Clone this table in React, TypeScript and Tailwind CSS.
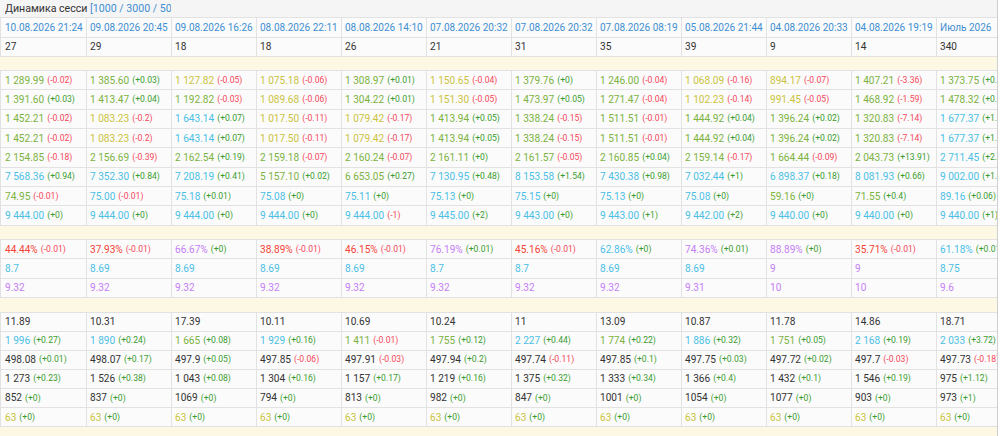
import React from "react"

type Cell = [string, string, string?]

const valueColor: Record<string, string> = {
  g: "text-[#7cb342]",
  y: "text-[#cbc340]",
  b: "text-[#4bbfe5]",
  p: "text-[#c57ef5]",
  r: "text-[#f44336]",
  d: "text-[#333333]",
}

const dates = [
  "10.08.2026 21:24",
  "09.08.2026 20:45",
  "09.08.2026 16:26",
  "08.08.2026 22:11",
  "08.08.2026 14:10",
  "07.08.2026 20:32",
  "07.08.2026 20:32",
  "07.08.2026 08:19",
  "05.08.2026 21:44",
  "04.08.2026 20:33",
  "04.08.2026 19:19",
  "Июль 2026",
]

const counts = ["27", "29", "18", "18", "26", "21", "31", "35", "39", "9", "14", "340"]

const priceRows: Cell[][] = [
  [
    ["1 289.99", "g", "-0.02"], ["1 385.60", "g", "+0.03"], ["1 127.82", "y", "-0.05"], ["1 075.18", "y", "-0.06"],
    ["1 308.97", "g", "+0.01"], ["1 150.65", "y", "-0.04"], ["1 379.76", "g", "+0"], ["1 246.00", "g", "-0.04"],
    ["1 068.09", "y", "-0.16"], ["894.17", "y", "-0.07"], ["1 407.21", "g", "-3.36"], ["1 373.75", "g", "+0.02"],
  ],
  [
    ["1 391.60", "g", "+0.03"], ["1 413.47", "g", "+0.04"], ["1 192.82", "g", "-0.03"], ["1 089.68", "y", "-0.06"],
    ["1 304.22", "g", "+0.01"], ["1 151.30", "y", "-0.05"], ["1 473.97", "g", "+0.05"], ["1 271.47", "g", "-0.04"],
    ["1 102.23", "y", "-0.14"], ["991.45", "y", "-0.05"], ["1 468.92", "g", "-1.59"], ["1 478.32", "g", "+0.01"],
  ],
  [
    ["1 452.21", "g", "-0.02"], ["1 083.23", "y", "-0.2"], ["1 643.14", "b", "+0.07"], ["1 017.50", "y", "-0.11"],
    ["1 079.42", "y", "-0.17"], ["1 413.94", "g", "+0.05"], ["1 338.24", "g", "-0.15"], ["1 511.51", "g", "-0.01"],
    ["1 444.92", "g", "+0.04"], ["1 396.24", "g", "+0.02"], ["1 320.83", "g", "-7.14"], ["1 677.37", "b", "+1.2"],
  ],
  [
    ["1 452.21", "g", "-0.02"], ["1 083.23", "y", "-0.2"], ["1 643.14", "b", "+0.07"], ["1 017.50", "y", "-0.11"],
    ["1 079.42", "y", "-0.17"], ["1 413.94", "g", "+0.05"], ["1 338.24", "g", "-0.15"], ["1 511.51", "g", "-0.01"],
    ["1 444.92", "g", "+0.04"], ["1 396.24", "g", "+0.02"], ["1 320.83", "g", "-7.14"], ["1 677.37", "b", "+1.2"],
  ],
  [
    ["2 154.85", "g", "-0.18"], ["2 156.69", "g", "-0.39"], ["2 162.54", "g", "+0.19"], ["2 159.18", "g", "-0.07"],
    ["2 160.24", "g", "-0.07"], ["2 161.11", "g", "+0"], ["2 161.57", "g", "-0.05"], ["2 160.85", "g", "+0.04"],
    ["2 159.14", "g", "-0.17"], ["1 664.44", "g", "-0.09"], ["2 043.73", "g", "+13.91"], ["2 711.45", "b", "+2.1"],
  ],
  [
    ["7 568.36", "b", "+0.94"], ["7 352.30", "b", "+0.84"], ["7 208.19", "b", "+0.41"], ["5 157.10", "g", "+0.02"],
    ["6 653.05", "g", "+0.27"], ["7 130.95", "b", "+0.48"], ["8 153.58", "b", "+1.54"], ["7 430.38", "b", "+0.98"],
    ["7 032.44", "b", "+1"], ["6 898.37", "b", "+0.18"], ["8 081.93", "b", "+0.66"], ["9 002.00", "b", "+1.3"],
  ],
  [
    ["74.95", "g", "-0.01"], ["75.00", "b", "-0.01"], ["75.18", "b", "+0.01"], ["75.08", "b", "+0"],
    ["75.11", "b", "+0"], ["75.13", "b", "+0"], ["75.15", "b", "+0"], ["75.13", "b", "+0"],
    ["75.08", "b", "+0"], ["59.16", "g", "+0"], ["71.55", "g", "+0.4"], ["89.16", "b", "+0.06"],
  ],
  [
    ["9 444.00", "b", "+0"], ["9 444.00", "b", "+0"], ["9 444.00", "b", "+0"], ["9 444.00", "b", "+0"],
    ["9 444.00", "b", "-1"], ["9 445.00", "b", "+2"], ["9 443.00", "b", "+0"], ["9 443.00", "b", "+1"],
    ["9 442.00", "b", "+2"], ["9 440.00", "b", "+0"], ["9 440.00", "b", "+0"], ["9 440.00", "b", "+1"],
  ],
]

const rateRows: Cell[][] = [
  [
    ["44.44%", "r", "-0.01"], ["37.93%", "r", "-0.01"], ["66.67%", "p", "+0"], ["38.89%", "r", "-0.01"],
    ["46.15%", "r", "-0.01"], ["76.19%", "p", "+0.01"], ["45.16%", "r", "-0.01"], ["62.86%", "b", "+0"],
    ["74.36%", "p", "+0.01"], ["88.89%", "p", "+0"], ["35.71%", "r", "-0.01"], ["61.18%", "b", "+0.01"],
  ],
  [
    ["8.7", "b"], ["8.69", "b"], ["8.69", "b"], ["8.69", "b"], ["8.69", "b"], ["8.7", "b"],
    ["8.7", "b"], ["8.69", "b"], ["8.69", "b"], ["9", "p"], ["9", "p"], ["8.75", "b"],
  ],
  [
    ["9.32", "p"], ["9.32", "p"], ["9.32", "p"], ["9.32", "p"], ["9.32", "p"], ["9.32", "p"],
    ["9.32", "p"], ["9.32", "p"], ["9.31", "p"], ["10", "p"], ["10", "p"], ["9.6", "p"],
  ],
]

const statRows: Cell[][] = [
  [
    ["11.89", "d"], ["10.31", "d"], ["17.39", "d"], ["10.11", "d"], ["10.69", "d"], ["10.24", "d"],
    ["11", "d"], ["13.09", "d"], ["10.87", "d"], ["11.78", "d"], ["14.86", "d"], ["18.71", "d"],
  ],
  [
    ["1 996", "b", "+0.27"], ["1 890", "b", "+0.24"], ["1 665", "g", "+0.08"], ["1 929", "b", "+0.16"],
    ["1 411", "g", "-0.01"], ["1 755", "g", "+0.12"], ["2 227", "b", "+0.44"], ["1 774", "g", "+0.22"],
    ["1 886", "b", "+0.32"], ["1 751", "g", "+0.05"], ["2 168", "b", "+0.19"], ["2 033", "b", "+3.72"],
  ],
  [
    ["498.08", "d", "+0.01"], ["498.07", "d", "+0.17"], ["497.9", "d", "+0.05"], ["497.85", "d", "-0.06"],
    ["497.91", "d", "-0.03"], ["497.94", "d", "+0.2"], ["497.74", "d", "-0.11"], ["497.85", "d", "+0.1"],
    ["497.75", "d", "+0.03"], ["497.72", "d", "+0.02"], ["497.7", "d", "-0.03"], ["497.73", "d", "-0.18"],
  ],
  [
    ["1 273", "d", "+0.23"], ["1 526", "d", "+0.38"], ["1 043", "d", "+0.08"], ["1 304", "d", "+0.16"],
    ["1 157", "d", "+0.17"], ["1 219", "d", "+0.16"], ["1 375", "d", "+0.32"], ["1 333", "d", "+0.34"],
    ["1 366", "d", "+0.4"], ["1 432", "d", "+0.1"], ["1 546", "d", "+0.19"], ["975", "d", "+1.12"],
  ],
  [
    ["852", "d", "+0"], ["837", "d", "+0"], ["1069", "d", "+0"], ["794", "d", "+0"], ["813", "d", "+0"], ["982", "d", "+0"],
    ["847", "d", "+0"], ["1001", "d", "+0"], ["1054", "d", "+0"], ["1077", "d", "+0"], ["903", "d", "+0"], ["973", "d", "+1"],
  ],
  Array.from({ length: 12 }, () => ["63", "y", "+0"] as Cell),
]

function Row({ children, height }: { children: React.ReactNode; height: string }) {
  return <div className={`flex border-b border-[#e2e2e2] ${height}`}>{children}</div>
}

function CellBox({ index, children }: { index: number; children: React.ReactNode }) {
  return (
    <div
      className={`flex shrink-0 items-center overflow-hidden whitespace-nowrap border-r border-[#e2e2e2] bg-[#fbfbfb] ${
        index === 0 ? "w-[87px] border-l pl-[4px]" : "w-[85px] pl-[3px]"
      }`}
    >
      {children}
    </div>
  )
}

function DataRow({ cells, height }: { cells: Cell[]; height: string }) {
  return (
    <Row height={height}>
      {cells.map(([value, color, delta], i) => (
        <CellBox key={i} index={i}>
          <span className={`text-[10.1px] ${valueColor[color]}`}>{value}</span>
          {delta && (
            <span
              className={`ml-[3px] text-[8.6px] ${delta.startsWith("-") ? "text-[#f4475a]" : "text-[#3a9b2f]"}`}
            >
              ({delta})
            </span>
          )}
        </CellBox>
      ))}
    </Row>
  )
}

function Separator({ height }: { height: string }) {
  return <div className={`border-b border-[#e2e2e2] bg-[#fcf8e3] ${height}`} />
}

export default function App() {
  return (
    <div
      className="h-[436px] w-[998px] overflow-hidden border-r border-[#cfcfcf] bg-white"
      style={{ fontFamily: "Roboto, 'Noto Sans', sans-serif" }}
    >
      {/* title */}
      <div className="flex h-[18px] items-center border-b border-[#e2e2e2] bg-[#f5f5f5] pl-[5px]">
        <div className="w-[166px] shrink-0 overflow-hidden whitespace-nowrap text-[10.6px] text-[#333333]">
          Динамика сесси <span className="text-[#3f8fd2]">[1000 / 3000 / 5000]</span>
        </div>
      </div>

      <div className="w-[1022px]">
        <Row height="h-[20px]">
          {dates.map((d, i) => (
            <CellBox key={i} index={i}>
              <span className="text-[10px] text-[#3f8fd2]">{d}</span>
            </CellBox>
          ))}
        </Row>
        <Row height="h-[19px]">
          {counts.map((c, i) => (
            <CellBox key={i} index={i}>
              <span className="text-[10.1px] text-[#333333]">{c}</span>
            </CellBox>
          ))}
        </Row>

        <Separator height="h-[14px]" />
        {priceRows.map((cells, i) => (
          <DataRow key={i} cells={cells} height="h-[19.33px]" />
        ))}

        <Separator height="h-[14.5px]" />
        {rateRows.map((cells, i) => (
          <DataRow key={i} cells={cells} height="h-[19.33px]" />
        ))}

        <Separator height="h-[14.5px]" />
        {statRows.map((cells, i) => (
          <DataRow key={i} cells={cells} height="h-[19.1px]" />
        ))}

        <Separator height="h-[14px]" />
      </div>
    </div>
  )
}
